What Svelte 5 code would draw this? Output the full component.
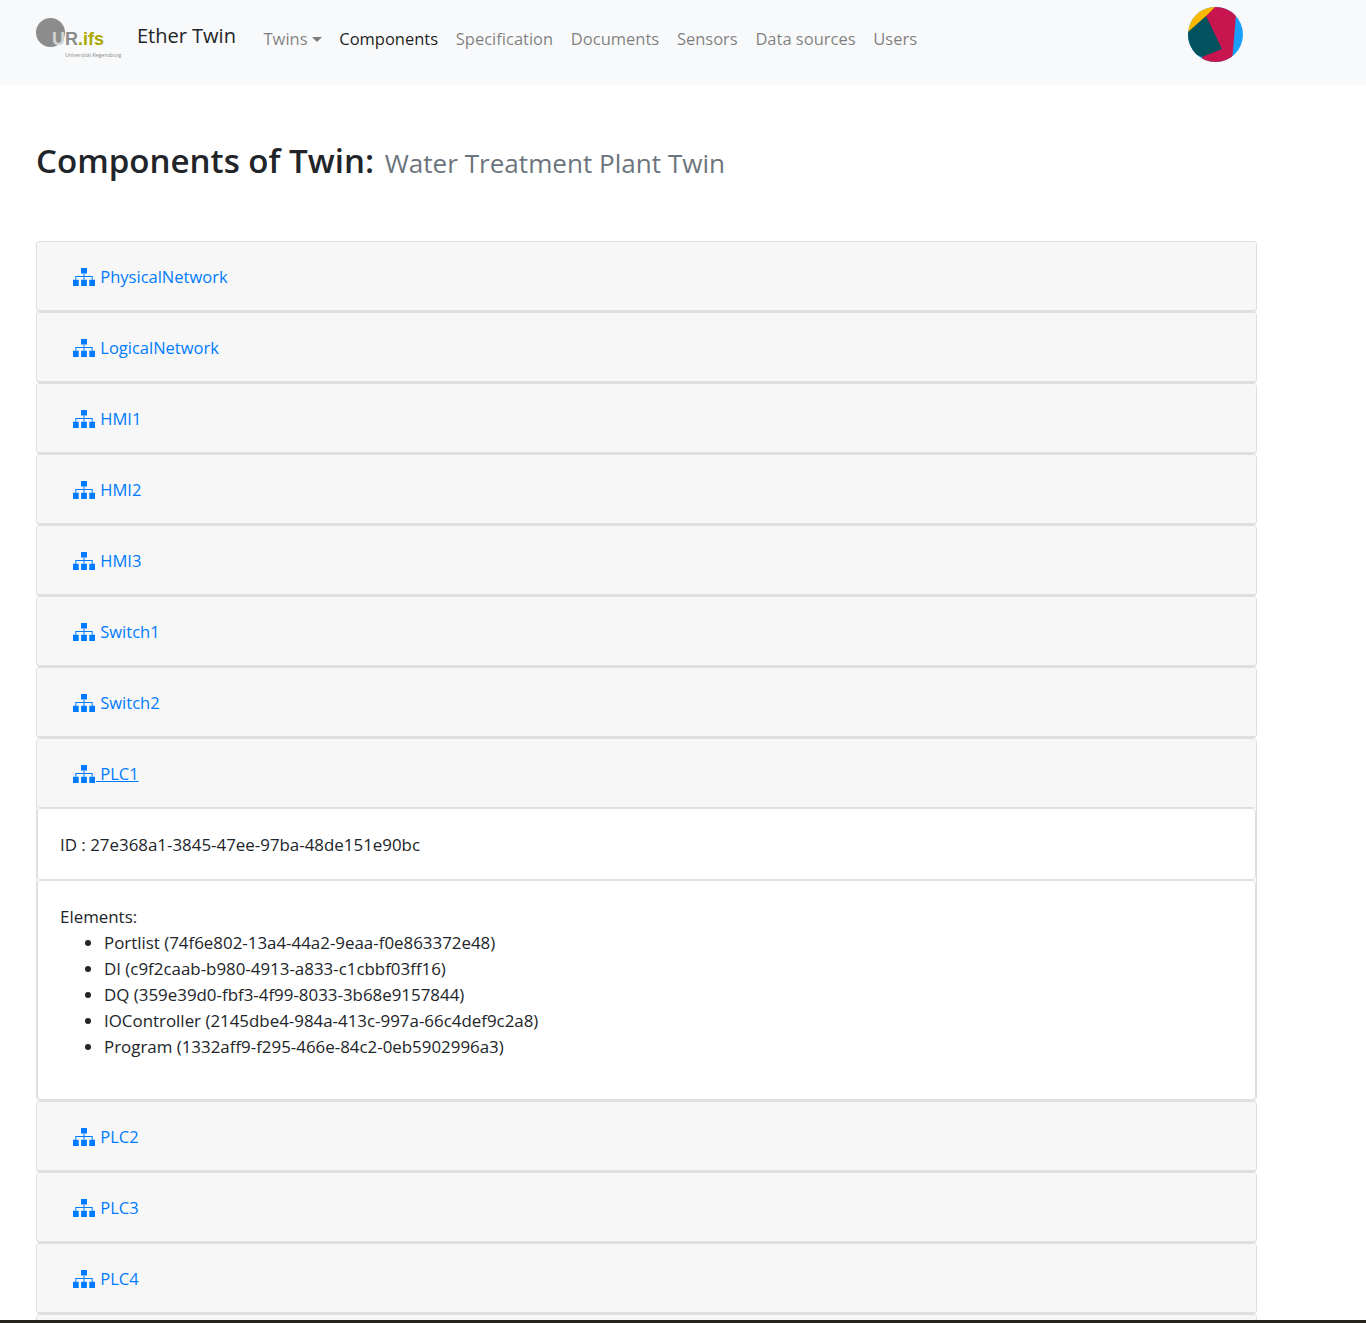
<script lang="ts">
    const before = ["PhysicalNetwork", "LogicalNetwork", "HMI1", "HMI2", "HMI3", "Switch1", "Switch2"];
    const after = ["PLC2", "PLC3", "PLC4"];
    const elements = [
        "Portlist (74f6e802-13a4-44a2-9eaa-f0e863372e48)",
        "DI (c9f2caab-b980-4913-a833-c1cbbf03ff16)",
        "DQ (359e39d0-fbf3-4f99-8033-3b68e9157844)",
        "IOController (2145dbe4-984a-413c-997a-66c4def9c2a8)",
        "Program (1332aff9-f295-466e-84c2-0eb5902996a3)",
    ];
    const links = ["Specification", "Documents", "Sensors", "Data sources", "Users"];
</script>

{#snippet icon()}
    <svg class="icon" viewBox="0 0 22 18" aria-hidden="true">
        <path d="M8 0h6v5.5H8zM0 11.8h5.7V18H0zM8.1 11.8h5.8V18H8.1zM16.3 11.8H22V18h-5.7z" />
        <path d="M10.5 5.5h1V8h8.2v3.8h-1V9h-7.2v2.8h-1V9H3.3v2.8h-1V8h8.2z" />
    </svg>
{/snippet}

{#snippet header(name: string, active = false)}
    <div class="card-header">
        <a href="#top" class:active>{@render icon()} {name}</a>
    </div>
{/snippet}

<nav class="navbar">
    <div class="logo">
        <span class="disc"></span>
        <span class="mark"><b class="u">U</b><b class="r">R</b><b class="ifs">.ifs</b></span>
        <span class="uni">Universität Regensburg</span>
    </div>
    <span class="brand">Ether Twin</span>
    <ul class="links">
        <li>Twins<i class="caret"></i></li>
        <li class="current">Components</li>
        {#each links as link}
            <li>{link}</li>
        {/each}
    </ul>
    <svg class="avatar" viewBox="0 0 55 55" aria-hidden="true">
        <defs><clipPath id="round"><circle cx="27.5" cy="27.5" r="27.5" /></clipPath></defs>
        <g clip-path="url(#round)">
            <rect width="55" height="55" fill="#18a0fb" />
            <path d="M0 0H30L0 26Z" fill="#fcb900" />
            <path d="M18 9 27 0H55V8H48L44 55H14V50Z" fill="#c9154f" />
            <path d="M0 25 18 9 34 42 14 50 0 45Z" fill="#01525f" />
        </g>
    </svg>
</nav>

<main>
    <h3 class="title">Components of Twin: <small>Water Treatment Plant Twin</small></h3>

    <div class="accordion">
        {#each before as name}
            <section class="card">{@render header(name)}</section>
        {/each}

        <section class="card open">
            {@render header("PLC1", true)}
            <div class="inner id">ID : 27e368a1-3845-47ee-97ba-48de151e90bc</div>
            <div class="inner elements">
                Elements:
                <ul>
                    {#each elements as el}
                        <li>{el}</li>
                    {/each}
                </ul>
            </div>
        </section>

        {#each after as name}
            <section class="card">{@render header(name)}</section>
        {/each}
        <section class="card"><div class="card-header"></div></section>
    </div>
</main>
<div class="strip"></div>

<style>
    :global(body) {
        margin: 0;
        background: #fff;
        color: #212529;
        font-family: "Open Sans", "Noto Sans", sans-serif;
        font-size: 16.5px;
        line-height: 26px;
        overflow: hidden;
    }

    .navbar {
        display: flex;
        align-items: center;
        height: 85px;
        padding: 0 36px;
        background: #f8f9fa;
        box-sizing: border-box;
    }

    .logo {
        position: relative;
        width: 101px;
        height: 46px;
        margin-top: -7px;
        flex: none;
    }

    .disc {
        position: absolute;
        left: 0;
        top: 2px;
        width: 29px;
        height: 29px;
        border-radius: 50%;
        background: #8c8c8c;
    }

    .mark {
        position: absolute;
        left: 16px;
        top: 13px;
        font-size: 18px;
        line-height: 20px;
        font-family: "Liberation Sans", sans-serif;
    }

    .u {
        color: #d4d4d4;
    }

    .r {
        color: #8c8c8c;
    }

    .ifs {
        color: #aaa800;
    }

    .uni {
        position: absolute;
        left: 29px;
        top: 35px;
        font-size: 5.2px;
        line-height: 8px;
        color: #8a8a8a;
        white-space: nowrap;
    }

    .brand {
        font-size: 20px;
        color: #212529;
        margin-right: 27.6px;
        margin-top: -13px;
    }

    .links {
        display: flex;
        gap: 17.7px;
        list-style: none;
        margin: -7px 0 0;
        padding: 0;
        flex: 1;
        color: rgba(0, 0, 0, 0.5);
    }

    .current {
        color: rgba(0, 0, 0, 0.9);
    }

    .caret {
        display: inline-block;
        margin-left: 4px;
        vertical-align: 3px;
        border-top: 5px solid;
        border-left: 5px solid transparent;
        border-right: 5px solid transparent;
    }

    .avatar {
        width: 55px;
        height: 55px;
        margin-right: 87px;
        margin-top: -17px;
        flex: none;
    }

    main {
        padding: 0 36px;
        width: 1221px;
    }

    .title {
        margin: 54px 0 56px;
        font-size: 33.1px;
        line-height: 44px;
        font-weight: 600;
    }

    small {
        font-size: 26.1px;
        font-weight: 400;
        color: #6c757d;
        margin-left: 2px;
    }

    .card {
        border: 1px solid #dfdfdf;
        border-bottom-width: 2px;
        border-radius: 4px;
    }

    .card.open {
        border-bottom-width: 1px;
    }

    .card-header {
        height: 67px;
        padding: 1px 36px 0;
        display: flex;
        align-items: center;
        background: #f7f7f7;
        border-radius: 3px;
    }

    .open .card-header {
        border-bottom: 1px solid #dfdfdf;
    }

    a {
        color: #007bff;
        text-decoration: none;
        display: inline-flex;
        align-items: center;
        gap: 1px;
        white-space: pre;
    }

    a.active {
        text-decoration: underline;
    }

    .icon {
        width: 22px;
        height: 18px;
        fill: #007bff;
        flex: none;
    }

    .inner {
        padding: 0 22px;
        border: 1px solid #dfdfdf;
        border-radius: 4px;
        font-size: 16.9px;
    }

    .id {
        padding-top: 2px;
        height: 68px;
        display: flex;
        align-items: center;
    }

    .elements {
        height: 220px;
        padding-top: 23px;
        box-sizing: border-box;
    }

    .elements ul {
        margin: 0;
        padding-left: 44px;
    }

    .strip {
        position: fixed;
        left: 0;
        right: 0;
        bottom: 0;
        height: 3px;
        background: #25241f;
    }
</style>
